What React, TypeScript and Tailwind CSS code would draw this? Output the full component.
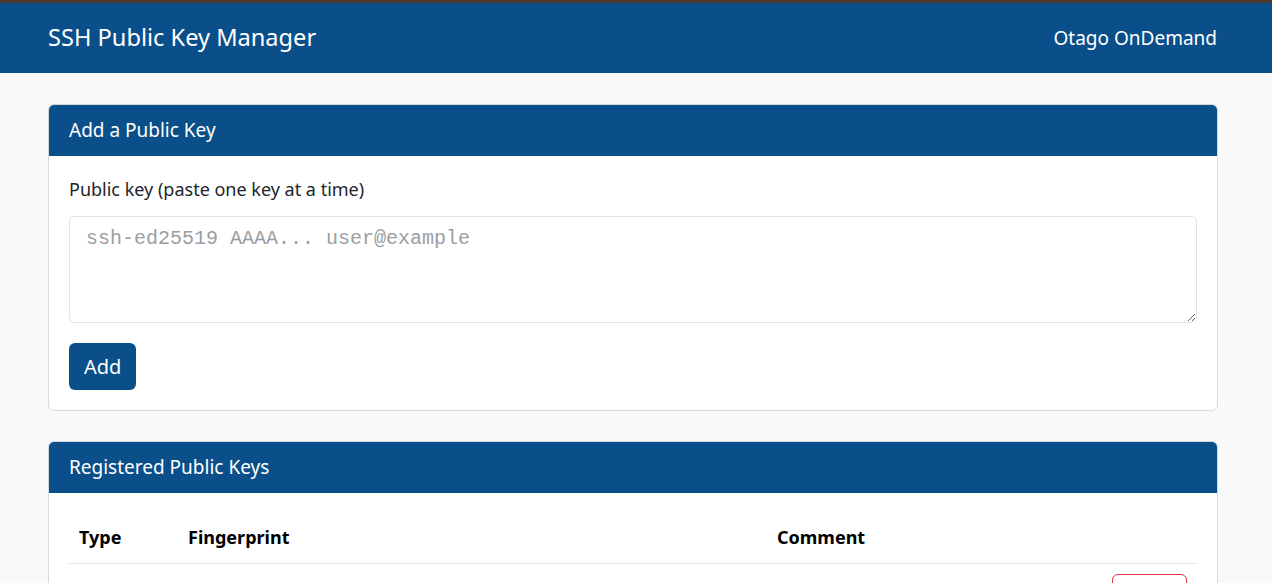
export default function App() {
  const font = { fontFamily: '"Noto Sans", "Open Sans", sans-serif' };
  return (
    <div className="min-h-screen bg-[#f8f9fa]" style={font}>
      <div className="h-[3px] bg-[#4b3a2e]" />
      <nav className="h-[70px] bg-[#0a4f8a] text-white flex items-center justify-between pl-12 pr-[55px]">
        <span className="text-[23.6px]">SSH Public Key Manager</span>
        <span className="text-[19px]">Otago OnDemand</span>
      </nav>

      <main className="pl-12 pr-[54px] pt-[31px] flex flex-col gap-[30px]">
        <section className="bg-white border border-[#d5d8dc] rounded-[6px] overflow-hidden">
          <div className="h-[51px] bg-[#0a4f8a] text-white text-[19px] flex items-center px-5">Add a Public Key</div>
          <div className="p-5">
            <label className="block text-[18px] text-[#212529] mb-[13px]">Public key (paste one key at a time)</label>
            <textarea
              className="block w-full h-[107px] border border-[#dee2e6] rounded-[6px] px-4 py-[7px] text-[20px] placeholder:text-[#9a9ea3] outline-none"
              style={{ fontFamily: '"Liberation Mono", monospace' }}
              placeholder="ssh-ed25519 AAAA... user@example"
            />
            <button className="mt-5 h-[47px] px-[15px] rounded-[6px] bg-[#0a4f8a] text-white text-[20px]">Add</button>
          </div>
        </section>

        <section className="bg-white border border-[#d5d8dc] rounded-[6px] overflow-hidden">
          <div className="h-[51px] bg-[#0a4f8a] text-white text-[19px] flex items-center px-5">Registered Public Keys</div>
          <div className="p-5">
            <table className="w-full text-[18px] text-black border-collapse">
              <thead>
                <tr className="border-b border-[#dee2e6]">
                  <th className="text-left font-bold px-[10px] pt-[11px] pb-[12px] w-[109px]">Type</th>
                  <th className="text-left font-bold px-[10px] pt-[11px] pb-[12px] w-[589px]">Fingerprint</th>
                  <th className="text-left font-bold px-[10px] pt-[11px] pb-[12px]">Comment</th>
                  <th className="w-[100px]" />
                </tr>
              </thead>
              <tbody>
                <tr>
                  <td className="px-[10px] pt-[17px] pb-3 align-top">
                    <span className="inline-block ml-[4px] h-[26px] px-3 rounded-[6px] bg-[#6c757d] text-white text-[14px]">ED25519</span>
                  </td>
                  <td className="px-[10px] pt-[18px]" />
                  <td className="px-[10px] pt-[18px]" />
                  <td className="pt-[10px] pr-[10px] text-right align-top">
                    <button className="h-[34px] w-[75px] rounded-[6px] border border-[#dc3545] text-[#dc3545] text-[16px]">Delete</button>
                  </td>
                </tr>
              </tbody>
            </table>
          </div>
        </section>
      </main>
    </div>
  );
}
